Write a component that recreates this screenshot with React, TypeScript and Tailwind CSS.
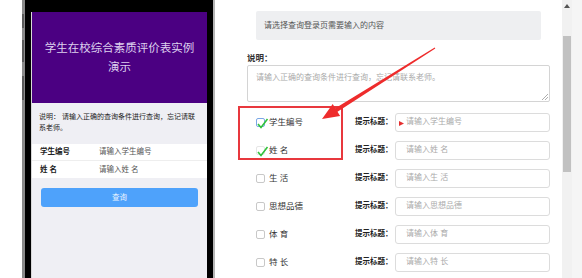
const cjk = { fontFamily: '"Liberation Sans", "Noto Sans CJK SC", sans-serif' }

const fields = [
  { label: '学生编号', checked: true, focus: true },
  { label: '姓 名', checked: true },
  { label: '生 活' },
  { label: '思想品德' },
  { label: '体 育' },
  { label: '特 长' },
]

function Check() {
  return (
    <svg className="absolute -left-[1px] -top-[2px]" width="13" height="13" viewBox="0 0 13 13">
      <path d="M2 7 L5 10.5 L11.5 2" fill="none" stroke="#2fc23a" strokeWidth="1.6" />
    </svg>
  )
}

function Phone() {
  return (
    <div className="relative ml-[22px] flex h-full w-[193px] border-l-[3px] border-r-[2px] border-l-[#8a8a8a] border-r-[#b5b5b5] bg-black px-[6px] pt-[12px]">
      <div className="absolute -left-[3px] top-[14px] h-[14px] w-[2px] bg-[#5a5a5a]" />
      <div className="absolute -left-[3px] top-[40px] h-[22px] w-[2px] bg-[#5a5a5a]" />
      <div className="absolute -left-[3px] top-[76px] h-[24px] w-[2px] bg-[#5a5a5a]" />
      <div className="flex w-full flex-col border-l border-[#d8d8d8] bg-[#efeff4]">
        <div className="flex h-[91px] items-center justify-center bg-[#4b0082] px-[12px] text-center text-[11.5px] leading-[19px] text-[#ddd0ee]">
          学生在校综合素质评价表实例演示
        </div>
        <div className="px-[7px] pt-[9px] pb-[11px] text-[7px] leading-[10.5px] text-[#222]">
          说明： 请输入正确的查询条件进行查询，忘记请联系老师。
        </div>
        <div className="bg-white text-[7.5px]">
          <div className="flex h-[17px] items-center border-b border-[#eeeeee] pl-[8px]">
            <span className="w-[59px] font-bold text-[#222]">学生编号</span>
            <span className="text-[#555]">请输入学生编号</span>
          </div>
          <div className="flex h-[17px] items-center pl-[8px]">
            <span className="w-[59px] font-bold text-[#222]">姓 名</span>
            <span className="text-[#555]">请输入姓 名</span>
          </div>
        </div>
        <div className="mx-[9px] mt-[10px] flex h-[19px] items-center justify-center rounded-[3px] bg-[#4ea2fb] text-[7.5px] text-[#e8f2ff]">
          查询
        </div>
      </div>
    </div>
  )
}

function Editor() {
  return (
    <div className="relative w-[342px] shrink-0 bg-white pl-[27px] pr-[12px] pt-[11px]">
      <div className="mx-[9px] flex h-[29px] items-center rounded-[2px] bg-[#eeeff1] pl-[8px] text-[8px] text-[#555]">
        请选择查询登录页需要输入的内容
      </div>
      <div className="mt-[13px] text-[8.5px] font-bold leading-[11px] text-[#333]">说明：</div>
      <div className="relative mt-[1px] h-[37px] rounded-[2px] border border-[#d4d4d4] px-[8px] pt-[6px] text-[8px] text-[#aaa]">
        请输入正确的查询条件进行查询，忘记请联系老师。
        <svg className="absolute bottom-[1px] right-[1px]" width="6" height="6" viewBox="0 0 6 6">
          <path d="M0 6 L6 0 M3 6 L6 3" stroke="#999" strokeWidth="0.8" />
        </svg>
      </div>
      <div className="mt-[6px] flex flex-col">
        {fields.map((f) => (
          <div key={f.label} className="flex h-[28px] items-center">
            <div className="flex w-[108px] shrink-0 items-center pl-[9px]">
              <div
                className={`relative h-[9px] w-[9px] shrink-0 rounded-[2px] border ${
                  f.focus ? 'border-[#7aa7e6]' : f.checked ? 'border-[#e6e6e6]' : 'border-[#c8c8c8]'
                }`}
              >
                {f.checked && <Check />}
              </div>
              <span className="ml-[4px] whitespace-nowrap text-[8.5px] text-[#333]">{f.label}</span>
            </div>
            <span className="w-[40px] shrink-0 whitespace-nowrap text-[7.5px] font-bold text-[#222]">提示标题：</span>
            <div className="relative flex h-[19px] flex-1 items-center rounded-[3px] border border-[#dcdcdc] pl-[10px] text-[8px] text-[#aaa]">
              {f.focus && (
                <svg className="absolute left-[3px] top-[7px]" width="5" height="5" viewBox="0 0 5 5">
                  <path d="M0 0 L5 2.5 L0 5 Z" fill="#e52f2f" />
                </svg>
              )}
              请输入{f.label}
            </div>
          </div>
        ))}
      </div>
      <div className="absolute left-[18px] top-[106px] h-[54px] w-[105px] border-2 border-[#e8383d]" />
    </div>
  )
}

export default function App() {
  return (
    <div className="relative flex h-[278px] w-[582px] overflow-hidden bg-white" style={cjk}>
      <div className="w-[220px] shrink-0">
        <Phone />
      </div>
      <Editor />
      <div className="relative w-[10px] shrink-0 bg-[#f1f1f1]">
        <svg className="absolute left-[2px] top-[4px]" width="6" height="4" viewBox="0 0 6 4">
          <path d="M0 4 L3 0 L6 4 Z" fill="#555" />
        </svg>
        <div className="absolute left-[1px] top-[36px] h-[136px] w-[8px] bg-[#c1c1c1]" />
      </div>
      <div className="w-[10px] shrink-0 bg-[#f5f5f5]" />
      <svg className="pointer-events-none absolute left-0 top-0" width="582" height="278">
        <polygon
          points="435.3,48.4 434.7,47.6 335.3,108.3 332.7,104.1 322,119 340.1,115.9 337.5,111.7"
          fill="#ee2c2c"
        />
      </svg>
    </div>
  )
}
